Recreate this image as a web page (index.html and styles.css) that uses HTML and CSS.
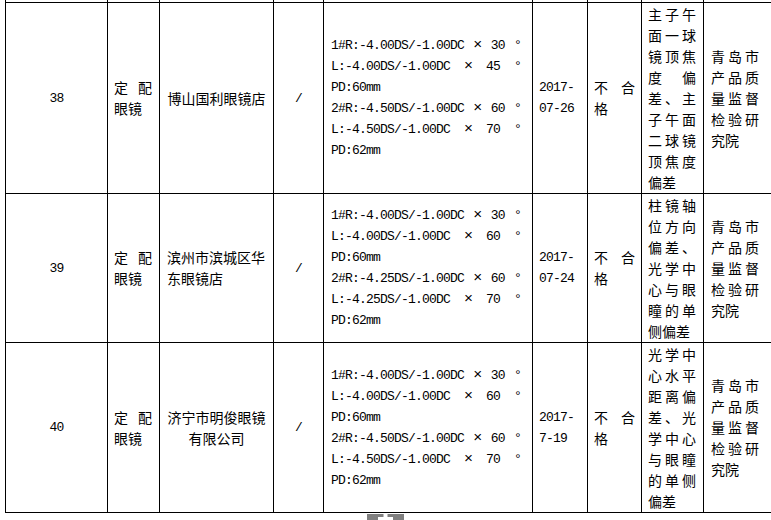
FILE: index.html
```html
<!DOCTYPE html>
<html lang="zh-CN">
<head>
<meta charset="utf-8">
<title>定配眼镜抽查结果</title>
<link rel="stylesheet" href="styles.css">
</head>
<body>
<table class="grid">
  <colgroup>
    <col class="c1"><col class="c2"><col class="c3"><col class="c4"><col class="c5"><col class="c6"><col class="c7"><col class="c8"><col class="c9">
  </colgroup>
  <tr class="stub"><td></td><td></td><td></td><td></td><td></td><td></td><td></td><td></td><td></td></tr>
  <tr class="r38">
    <td class="num lat">38</td>
    <td class="kind"><div class="jl w-kind"><span>定</span><span>配</span></div><div>眼镜</div></td>
    <td class="shop">博山国利眼镜店</td>
    <td class="slash lat">/</td>
    <td class="spec lat">
      <div class="sl"><span>1#R:-4.00DS/-1.00DC</span><span>×</span><span>30</span><span>°</span></div>
      <div class="sl"><span>L:-4.00DS/-1.00DC</span><span>×</span><span>45</span><span>°</span></div>
      <div>PD:60mm</div>
      <div class="sl"><span>2#R:-4.50DS/-1.00DC</span><span>×</span><span>60</span><span>°</span></div>
      <div class="sl"><span>L:-4.50DS/-1.00DC</span><span>×</span><span>70</span><span>°</span></div>
      <div>PD:62mm</div>
    </td>
    <td class="date lat">2017-<br>07-26</td>
    <td class="res"><div class="jl w-res"><span>不</span><span>合</span></div><div>格</div></td>
    <td class="item">
      <div class="jl w-item"><span>主</span><span>子</span><span>午</span></div>
      <div class="jl w-item"><span>面</span><span>一</span><span>球</span></div>
      <div class="jl w-item"><span>镜</span><span>顶</span><span>焦</span></div>
      <div class="jl w-item"><span>度</span><span>偏</span></div>
      <div class="jl w-item"><span>差</span><span>、</span><span>主</span></div>
      <div class="jl w-item"><span>子</span><span>午</span><span>面</span></div>
      <div class="jl w-item"><span>二</span><span>球</span><span>镜</span></div>
      <div class="jl w-item"><span>顶</span><span>焦</span><span>度</span></div>
      <div>偏差</div>
    </td>
    <td class="org">
      <div class="jl w-org"><span>青</span><span>岛</span><span>市</span></div>
      <div class="jl w-org"><span>产</span><span>品</span><span>质</span></div>
      <div class="jl w-org"><span>量</span><span>监</span><span>督</span></div>
      <div class="jl w-org"><span>检</span><span>验</span><span>研</span></div>
      <div>究院</div>
    </td>
  </tr>
  <tr class="r39">
    <td class="num lat">39</td>
    <td class="kind"><div class="jl w-kind"><span>定</span><span>配</span></div><div>眼镜</div></td>
    <td class="shop shop-left">滨州市滨城区华<br>东眼镜店</td>
    <td class="slash lat">/</td>
    <td class="spec lat">
      <div class="sl"><span>1#R:-4.00DS/-1.00DC</span><span>×</span><span>30</span><span>°</span></div>
      <div class="sl"><span>L:-4.00DS/-1.00DC</span><span>×</span><span>60</span><span>°</span></div>
      <div>PD:60mm</div>
      <div class="sl"><span>2#R:-4.25DS/-1.00DC</span><span>×</span><span>60</span><span>°</span></div>
      <div class="sl"><span>L:-4.25DS/-1.00DC</span><span>×</span><span>70</span><span>°</span></div>
      <div>PD:62mm</div>
    </td>
    <td class="date lat">2017-<br>07-24</td>
    <td class="res"><div class="jl w-res"><span>不</span><span>合</span></div><div>格</div></td>
    <td class="item">
      <div class="jl w-item"><span>柱</span><span>镜</span><span>轴</span></div>
      <div class="jl w-item"><span>位</span><span>方</span><span>向</span></div>
      <div class="jl w-item"><span>偏</span><span>差</span><span>、</span></div>
      <div class="jl w-item"><span>光</span><span>学</span><span>中</span></div>
      <div class="jl w-item"><span>心</span><span>与</span><span>眼</span></div>
      <div class="jl w-item"><span>瞳</span><span>的</span><span>单</span></div>
      <div>侧偏差</div>
    </td>
    <td class="org">
      <div class="jl w-org"><span>青</span><span>岛</span><span>市</span></div>
      <div class="jl w-org"><span>产</span><span>品</span><span>质</span></div>
      <div class="jl w-org"><span>量</span><span>监</span><span>督</span></div>
      <div class="jl w-org"><span>检</span><span>验</span><span>研</span></div>
      <div>究院</div>
    </td>
  </tr>
  <tr class="r40">
    <td class="num lat">40</td>
    <td class="kind"><div class="jl w-kind"><span>定</span><span>配</span></div><div>眼镜</div></td>
    <td class="shop">济宁市明俊眼镜<br>有限公司</td>
    <td class="slash lat">/</td>
    <td class="spec lat">
      <div class="sl"><span>1#R:-4.00DS/-1.00DC</span><span>×</span><span>30</span><span>°</span></div>
      <div class="sl"><span>L:-4.00DS/-1.00DC</span><span>×</span><span>60</span><span>°</span></div>
      <div>PD:60mm</div>
      <div class="sl"><span>2#R:-4.50DS/-1.00DC</span><span>×</span><span>60</span><span>°</span></div>
      <div class="sl"><span>L:-4.50DS/-1.00DC</span><span>×</span><span>70</span><span>°</span></div>
      <div>PD:62mm</div>
    </td>
    <td class="date lat">2017-<br>7-19</td>
    <td class="res"><div class="jl w-res"><span>不</span><span>合</span></div><div>格</div></td>
    <td class="item">
      <div class="jl w-item"><span>光</span><span>学</span><span>中</span></div>
      <div class="jl w-item"><span>心</span><span>水</span><span>平</span></div>
      <div class="jl w-item"><span>距</span><span>离</span><span>偏</span></div>
      <div class="jl w-item"><span>差</span><span>、</span><span>光</span></div>
      <div class="jl w-item"><span>学</span><span>中</span><span>心</span></div>
      <div class="jl w-item"><span>与</span><span>眼</span><span>瞳</span></div>
      <div class="jl w-item"><span>的</span><span>单</span><span>侧</span></div>
      <div>偏差</div>
    </td>
    <td class="org">
      <div class="jl w-org"><span>青</span><span>岛</span><span>市</span></div>
      <div class="jl w-org"><span>产</span><span>品</span><span>质</span></div>
      <div class="jl w-org"><span>量</span><span>监</span><span>督</span></div>
      <div class="jl w-org"><span>检</span><span>验</span><span>研</span></div>
      <div>究院</div>
    </td>
  </tr>
</table>
<div class="dock">
  <div class="dock-btn">
    <svg class="dock-icon" width="37" height="16" viewBox="0 0 37 16" aria-hidden="true">
      <rect x="16.5" y="0" width="4" height="14" fill="#fff"/>
      <rect x="11" y="3" width="15" height="4" fill="#fff"/>
    </svg>
  </div>
</div>
</body>
</html>
```
FILE: styles.css
```css
html, body {
  margin: 0;
  padding: 0;
  background: #fff;
  overflow: hidden;
}
body {
  font-family: "Noto Sans CJK SC", "Noto Sans CJK TC", sans-serif;
  font-size: 14px;
  line-height: 21px;
  color: #000;
}
.grid {
  border-collapse: collapse;
  table-layout: fixed;
  margin-left: 5px;
  width: 767px;
}
.c1 { width: 102px; }
.c2 { width: 52px; }
.c3 { width: 114px; }
.c4 { width: 50px; }
.c5 { width: 209px; }
.c6 { width: 55px; }
.c7 { width: 54px; }
.c8 { width: 62px; }
.c9 { width: 69px; }
td {
  border: 1px solid #000;
  padding: 0;
  vertical-align: middle;
  overflow: hidden;
}
.stub td {
  border-top: 0;
  height: 2px;
}
.r38 { height: 191px; }
.r39 { height: 149px; }
.r40 { height: 170px; }
.lat {
  font-family: "Liberation Mono", "DejaVu Sans Mono", monospace;
  font-size: 13px;
  letter-spacing: -0.8px;
}
.sl span:nth-child(2) {
  font-size: 15px;
}
.num { text-align: center; }
.kind { padding-left: 6px; }
.shop { text-align: center; }
.shop-left { text-align: left; padding-left: 7px; }
.slash { text-align: center; }
.spec { padding-left: 7px; }
.date { padding-left: 6px; }
.res { padding-left: 6px; }
.item { padding-left: 6px; }
.org { padding-left: 7px; }
.jl {
  display: flex;
  justify-content: space-between;
}
.w-kind { width: 38px; }
.w-res { width: 41px; }
.w-item { width: 48px; }
.w-org { width: 48px; }
.sl {
  display: flex;
  justify-content: space-between;
  width: 190px;
}
.dock {
  display: flex;
  padding-left: 367px;
  padding-top: 1px;
}
.dock-btn {
  width: 37px;
  height: 30px;
  background: #7f7f7f;
}
.dock-icon { display: block; }
```
